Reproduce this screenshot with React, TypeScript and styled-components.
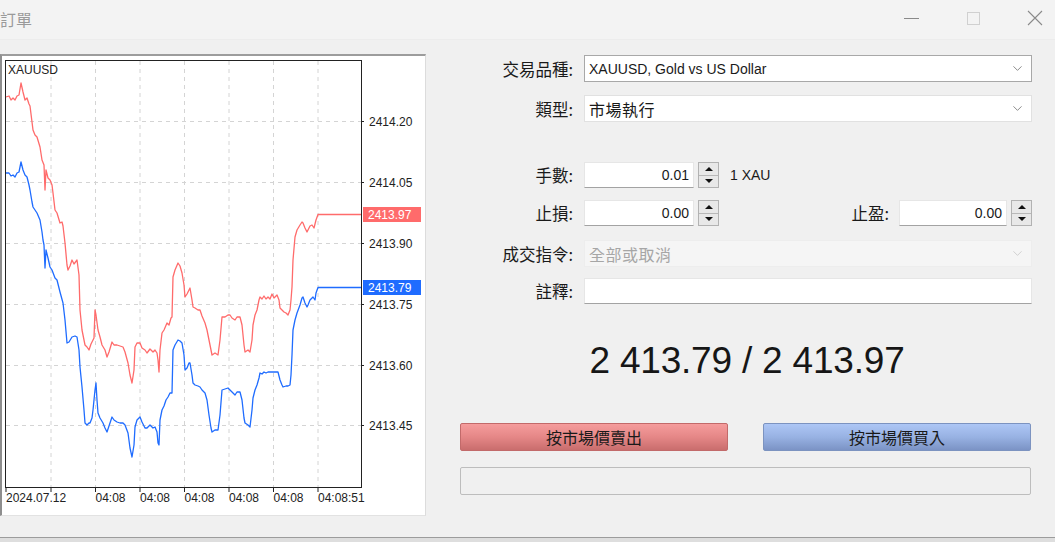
import React from 'react';
import styled, { createGlobalStyle } from 'styled-components';
import { ChevronDown } from 'lucide-react';

const GlobalStyle = createGlobalStyle`
  html, body {
    margin: 0;
    padding: 0;
    background: #f0f0f0;
  }
  body {
    font-family: "Liberation Sans", "Noto Sans CJK TC", sans-serif;
    color: #1a1a1a;
  }
`;

const CJK = `"Noto Sans CJK TC", "Liberation Sans", sans-serif`;
const LATIN = `"Liberation Sans", "Noto Sans CJK TC", sans-serif`;

const Window = styled.div`
  width: 1055px;
  height: 542px;
  display: flex;
  flex-direction: column;
  background: #f0f0f0;
  overflow: hidden;
`;

const TitleBar = styled.div`
  height: 39px;
  flex: none;
  display: flex;
  align-items: center;
  justify-content: space-between;
  background: #f3f3f3;
  border-bottom: 1px solid #ececec;
`;

const Title = styled.div`
  font-family: ${CJK};
  font-size: 16px;
  color: #9a9a9a;
  margin-top: -2px;
`;

const Controls = styled.div`
  display: flex;
  align-items: center;
  gap: 46px;
  padding-right: 12px;
  margin-top: -4px;
`;

const CtrlIcon = styled.svg`
  display: block;
  width: 16px;
  height: 16px;
`;

const Body = styled.div`
  flex: 1;
  display: flex;
  align-items: flex-start;
`;

const ChartPanel = styled.div`
  width: 423px;
  height: 459px;
  margin-top: 14px;
  background: #ffffff;
  border-top: 2px solid #9c9c9c;
  border-left: 2px solid #8e8e8e;
  border-right: 1px solid #dcdcdc;
  border-bottom: 1px solid #e2e2e2;
  svg {
    display: block;
  }
`;

const Form = styled.div`
  flex: 1;
  padding: 15px 23px 0 34px;
  display: flex;
  flex-direction: column;
`;

const Row = styled.div<{ $mt?: number }>`
  display: grid;
  grid-template-columns: 113px 1fr;
  column-gap: 11px;
  align-items: center;
  margin-top: ${(p) => p.$mt ?? 0}px;
`;

const Label = styled.div`
  font-family: ${CJK};
  font-size: 16.5px;
  text-align: right;
  color: #1a1a1a;
  white-space: nowrap;
`;

const SelectBox = styled.div<{ $variant?: 'focus' | 'normal' | 'disabled' }>`
  height: 27px;
  box-sizing: border-box;
  display: flex;
  align-items: center;
  justify-content: space-between;
  padding: 0 6px 0 4px;
  background: ${(p) => (p.$variant === 'disabled' ? '#f5f5f5' : '#ffffff')};
  border: 1px solid
    ${(p) =>
      p.$variant === 'focus' ? '#a8a8a8' : p.$variant === 'disabled' ? '#ededed' : '#e1e1e1'};
  color: ${(p) => (p.$variant === 'disabled' ? '#a6a6a6' : '#1a1a1a')};
`;

const SelectText = styled.span<{ $cjk?: boolean }>`
  font-family: ${(p) => (p.$cjk ? CJK : LATIN)};
  font-size: ${(p) => (p.$cjk ? 16 : 14)}px;
  letter-spacing: ${(p) => (p.$cjk ? '0.5px' : '0')};
`;

const FieldLine = styled.div`
  display: flex;
  align-items: center;
`;

const NumBox = styled.div<{ $w?: number }>`
  width: ${(p) => p.$w ?? 110}px;
  height: 26px;
  box-sizing: border-box;
  background: #ffffff;
  border: 1px solid #e6e6e6;
  border-bottom-color: #a3a3a3;
  display: flex;
  align-items: center;
  justify-content: flex-end;
  padding-right: 4px;
  font-family: ${LATIN};
  font-size: 14px;
  color: #1a1a1a;
`;

const TextBox = styled.div`
  height: 26px;
  box-sizing: border-box;
  background: #ffffff;
  border: 1px solid #e6e6e6;
  border-bottom-color: #a3a3a3;
`;

const Spin = styled.div`
  width: 21px;
  height: 26px;
  box-sizing: border-box;
  margin-left: 4px;
  border: 1px solid #b2b2b2;
  background: #e8e8e8;
  display: flex;
  flex-direction: column;
`;

const SpinHalf = styled.div<{ $down?: boolean }>`
  flex: 1;
  display: flex;
  align-items: center;
  justify-content: center;
  border-top: ${(p) => (p.$down ? '1px solid #b8b8b8' : 'none')};
  &::after {
    content: '';
    width: 0;
    height: 0;
    border-left: 4px solid transparent;
    border-right: 4px solid transparent;
    ${(p) => (p.$down ? 'border-top: 4px solid #111;' : 'border-bottom: 4px solid #111;')}
  }
`;

const Unit = styled.span`
  margin-left: 11px;
  font-family: ${LATIN};
  font-size: 14px;
  color: #1a1a1a;
`;

const InlineLabel = styled(Label)`
  flex: 1;
  padding-right: 10px;
`;

const Price = styled.div`
  margin-top: 37px;
  height: 40px;
  line-height: 40px;
  text-align: center;
  font-family: ${LATIN};
  font-size: 37px;
  letter-spacing: -0.2px;
  color: #161616;
  padding-left: 2px;
`;

const ButtonRow = styled.div`
  margin-top: 42px;
  display: grid;
  grid-template-columns: 268px 268px;
  justify-content: space-between;
  padding-right: 1px;
`;

const TradeButton = styled.div<{ $side: 'sell' | 'buy' }>`
  height: 28px;
  box-sizing: border-box;
  border-radius: 2px;
  display: flex;
  align-items: center;
  justify-content: center;
  font-family: ${CJK};
  font-size: 16px;
  color: #1a1a1a;
  border: 1px solid ${(p) => (p.$side === 'sell' ? '#c26a6a' : '#7c93c0')};
  background: ${(p) =>
    p.$side === 'sell'
      ? 'linear-gradient(#f59c9c, #e58787 50%, #c96d6d)'
      : 'linear-gradient(#adc6f5, #98b2e3 50%, #7b93c5)'};
`;

const StatusBox = styled.div`
  margin-top: 16px;
  height: 28px;
  box-sizing: border-box;
  margin-right: 1px;
  border: 1px solid #bdbdbd;
  border-radius: 2px;
  background: #f0f0f0;
`;

const BottomEdge = styled.div`
  height: 4px;
  flex: none;
  border-top: 1px solid #9c9c9c;
  background: #dedede;
`;

const RED = '#ff6b6b';
const BLUE = '#1f6cff';

const ask = [
  [6, 97], [9, 96], [11, 100], [13, 98], [15, 100], [17, 96], [19, 95], [21, 83], [23, 92], [25, 100],
  [27, 98], [29, 104], [30, 106], [32, 122], [33, 130], [35, 135], [37, 137], [40, 147], [42, 160],
  [44, 165], [45, 190], [46, 170], [48, 178], [50, 180], [52, 185], [53, 193], [55, 210], [57, 213],
  [60, 223], [62, 222], [63, 226], [65, 243], [67, 265], [68, 270], [70, 266], [72, 260], [74, 264],
  [77, 260], [79, 275], [80, 310], [82, 330], [85, 345], [87, 347], [89, 350], [91, 344], [94, 338],
  [95, 310], [96, 315], [98, 330], [100, 337], [102, 345], [105, 350], [107, 357], [109, 352],
  [112, 342], [114, 345], [117, 345], [120, 346], [123, 347], [125, 352], [128, 363], [130, 375],
  [132, 383], [134, 370], [135, 347], [137, 343], [140, 343], [142, 348], [145, 350], [147, 353],
  [150, 349], [153, 352], [155, 350], [157, 353], [158, 360], [159, 372], [160, 350], [162, 333],
  [164, 330], [167, 323], [169, 325], [171, 318], [172, 317], [173, 277], [175, 270], [178, 263],
  [180, 266], [182, 273], [184, 285], [185, 297], [187, 294], [189, 290], [190, 288], [192, 300],
  [193, 307], [195, 308], [198, 310], [200, 310], [202, 316], [205, 323], [207, 330], [209, 340],
  [211, 350], [212, 355], [215, 353], [218, 355], [220, 340], [222, 317], [225, 317], [228, 315],
  [230, 315], [232, 318], [235, 320], [237, 317], [240, 317], [242, 325], [244, 345], [245, 352],
  [248, 350], [250, 352], [252, 340], [253, 325], [255, 315], [257, 310], [259, 300], [260, 297],
  [262, 299], [264, 296], [266, 299], [268, 297], [270, 299], [272, 294], [274, 298], [277, 295],
  [279, 300], [280, 308], [282, 310], [284, 312], [286, 313], [288, 315], [290, 310], [291, 300],
  [292, 287], [293, 260], [295, 237], [297, 230], [300, 225], [302, 222], [303, 223], [305, 228],
  [307, 232], [308, 230], [310, 226], [312, 225], [314, 228], [316, 220], [318, 214.5], [361, 214.5],
];

const bid = [
  [6, 173], [9, 173], [11, 176], [13, 175], [15, 177], [17, 173], [19, 172], [21, 162], [23, 170],
  [25, 175], [27, 177], [29, 185], [30, 190], [32, 202], [33, 207], [35, 210], [37, 213], [40, 220],
  [42, 232], [43, 240], [44, 245], [45, 268], [46, 250], [48, 258], [50, 267], [52, 270], [55, 278],
  [57, 280], [60, 292], [63, 303], [65, 320], [67, 343], [69, 342], [72, 337], [75, 336], [77, 337],
  [79, 350], [80, 367], [82, 387], [84, 410], [85, 423], [87, 425], [89, 423], [90, 423], [92, 418],
  [93, 410], [95, 390], [96, 383], [97, 400], [98, 413], [100, 418], [103, 423], [105, 428],
  [107, 432], [109, 426], [112, 417], [114, 420], [117, 422], [120, 423], [123, 423], [125, 425],
  [128, 433], [130, 448], [132, 457], [134, 445], [135, 427], [137, 420], [140, 417], [142, 422],
  [145, 428], [147, 428], [150, 425], [153, 428], [155, 427], [157, 432], [158, 443], [159, 445],
  [160, 420], [162, 410], [164, 406], [166, 400], [168, 397], [170, 393], [172, 393], [173, 350],
  [175, 345], [178, 340], [180, 341], [182, 343], [184, 355], [185, 370], [187, 368], [189, 363],
  [190, 363], [192, 375], [193, 383], [195, 385], [198, 386], [200, 387], [202, 390], [205, 393],
  [207, 400], [209, 415], [211, 428], [212, 432], [215, 430], [218, 430], [220, 415], [222, 390],
  [225, 389], [228, 388], [230, 390], [232, 392], [235, 395], [237, 392], [240, 392], [242, 400],
  [244, 418], [245, 423], [248, 425], [250, 427], [252, 410], [253, 398], [255, 390], [257, 385],
  [259, 378], [260, 373], [262, 374], [264, 372], [266, 373], [268, 372], [272, 372], [275, 372],
  [278, 372], [280, 380], [282, 385], [283, 387], [286, 386], [288, 386], [290, 385], [291, 375],
  [292, 355], [293, 330], [295, 320], [297, 313], [300, 305], [302, 298], [303, 297], [305, 303],
  [307, 307], [308, 305], [310, 300], [313, 297], [315, 300], [316, 293], [318, 287.5], [361, 287.5],
];

const priceLevels = [
  { y: 121, t: '2414.20' },
  { y: 182, t: '2414.05' },
  { y: 243, t: '2413.90' },
  { y: 304, t: '2413.75' },
  { y: 365, t: '2413.60' },
  { y: 425, t: '2413.45' },
];

const timeTicks = [51, 95.5, 140, 184.5, 229, 273.5, 318];
const timeLabels = [
  { x: 6, t: '2024.07.12' },
  { x: 95.5, t: '04:08' },
  { x: 140, t: '04:08' },
  { x: 184.5, t: '04:08' },
  { x: 229, t: '04:08' },
  { x: 273.5, t: '04:08' },
  { x: 318, t: '04:08:51' },
];

const pts = (a: number[][]) => a.map(([x, y]) => `${x},${y}`).join(' ');

function Chart() {
  const font = 'Liberation Sans, sans-serif';
  return (
    <svg width={423} height={459} viewBox="2 56 423 459">
      {priceLevels.map((l) => (
        <line key={l.y} x1={6} x2={361} y1={l.y + 0.5} y2={l.y + 0.5} stroke="#d4d4d4" strokeDasharray="4 4" />
      ))}
      {timeTicks.map((x) => (
        <line key={x} x1={x} x2={x} y1={61} y2={487} stroke="#d4d4d4" strokeDasharray="4 4" />
      ))}
      <rect x={5.5} y={60.5} width={356} height={427} fill="none" stroke="#222" />
      {priceLevels.map((l) => (
        <g key={'p' + l.y}>
          <line x1={362} x2={364} y1={l.y + 0.5} y2={l.y + 0.5} stroke="#222" />
          <text x={369} y={l.y + 5} fontSize={12} fontFamily={font} fill="#222">
            {l.t}
          </text>
        </g>
      ))}
      {[6, ...timeTicks].map((x) => (
        <line key={'t' + x} x1={x} x2={x} y1={488} y2={492} stroke="#222" />
      ))}
      {timeLabels.map((l, i) => (
        <text key={i} x={l.x} y={502} fontSize={12} fontFamily={font} fill="#222">
          {l.t}
        </text>
      ))}
      <text x={8} y={74} fontSize={12} fontFamily={font} fill="#222">
        XAUUSD
      </text>
      <polyline points={pts(ask)} fill="none" stroke={RED} strokeWidth={1.3} strokeLinejoin="round" />
      <polyline points={pts(bid)} fill="none" stroke={BLUE} strokeWidth={1.3} strokeLinejoin="round" />
      <rect x={363} y={207} width={58} height={15} fill={RED} />
      <text x={368} y={219} fontSize={12} fontFamily={font} fill="#fff">
        2413.97
      </text>
      <rect x={363} y={280} width={58} height={15} fill={BLUE} />
      <text x={368} y={292} fontSize={12} fontFamily={font} fill="#fff">
        2413.79
      </text>
    </svg>
  );
}

function NumSpin({ value, w }: { value: string; w?: number }) {
  return (
    <>
      <NumBox $w={w}>{value}</NumBox>
      <Spin>
        <SpinHalf />
        <SpinHalf $down />
      </Spin>
    </>
  );
}

export default function App() {
  return (
    <>
      <GlobalStyle />
      <Window>
        <TitleBar>
          <Title>訂單</Title>
          <Controls>
            <CtrlIcon viewBox="0 0 16 16">
              <line x1={1} x2={16} y1={8.5} y2={8.5} stroke="#8a8a8a" />
            </CtrlIcon>
            <CtrlIcon viewBox="0 0 16 16">
              <rect x={2.5} y={2.5} width={12} height={12} fill="none" stroke="#d0d0d0" />
            </CtrlIcon>
            <CtrlIcon viewBox="0 0 16 16">
              <path d="M1 1 L15 15 M15 1 L1 15" stroke="#8a8a8a" strokeWidth={1.1} />
            </CtrlIcon>
          </Controls>
        </TitleBar>
        <Body>
          <ChartPanel>
            <Chart />
          </ChartPanel>
          <Form>
            <Row>
              <Label>交易品種:</Label>
              <SelectBox $variant="focus">
                <SelectText>XAUUSD, Gold vs US Dollar</SelectText>
                <ChevronDown size={15} strokeWidth={1.2} color="#666" />
              </SelectBox>
            </Row>
            <Row $mt={13}>
              <Label>類型:</Label>
              <SelectBox>
                <SelectText $cjk>市場執行</SelectText>
                <ChevronDown size={15} strokeWidth={1.2} color="#666" />
              </SelectBox>
            </Row>
            <Row $mt={40}>
              <Label>手數:</Label>
              <FieldLine>
                <NumSpin value="0.01" />
                <Unit>1 XAU</Unit>
              </FieldLine>
            </Row>
            <Row $mt={12}>
              <Label>止損:</Label>
              <FieldLine>
                <NumSpin value="0.00" />
                <InlineLabel>止盈:</InlineLabel>
                <NumSpin value="0.00" w={108} />
              </FieldLine>
            </Row>
            <Row $mt={14}>
              <Label>成交指令:</Label>
              <SelectBox $variant="disabled">
                <SelectText $cjk>全部或取消</SelectText>
                <ChevronDown size={15} strokeWidth={1.2} color="#c4c4c4" />
              </SelectBox>
            </Row>
            <Row $mt={11}>
              <Label>註釋:</Label>
              <TextBox />
            </Row>
            <Price>2 413.79 / 2 413.97</Price>
            <ButtonRow>
              <TradeButton $side="sell">按市場價賣出</TradeButton>
              <TradeButton $side="buy">按市場價買入</TradeButton>
            </ButtonRow>
            <StatusBox />
          </Form>
        </Body>
        <BottomEdge />
      </Window>
    </>
  );
}
